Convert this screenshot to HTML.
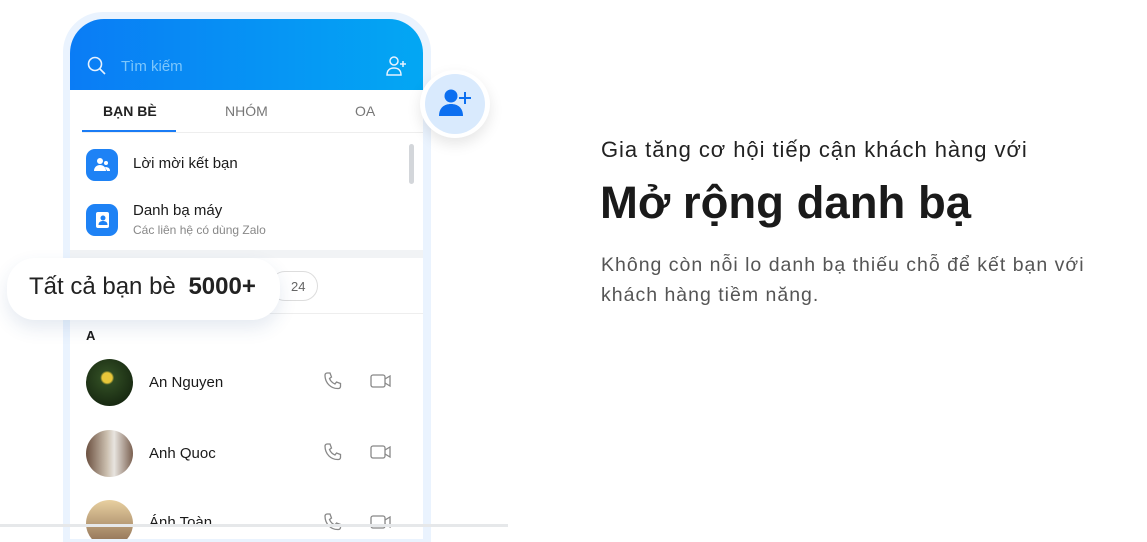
<!DOCTYPE html>
<html><head><meta charset="utf-8"><style>
*{margin:0;padding:0;box-sizing:border-box}
body{width:1147px;height:527px;background:#fff;font-family:"Liberation Sans",sans-serif;position:relative;overflow:hidden}
.abs{position:absolute}
.frame{left:63px;top:12px;width:368px;height:530px;background:#eaf3fe;border-radius:40px 40px 0 0}
.screen{left:70px;top:19px;width:353px;height:520px;background:#fff;border-radius:34px 34px 0 0;overflow:hidden}
.hdr{left:0;top:0;width:353px;height:71px;background:linear-gradient(90deg,#0a7cf5,#03a7f3)}
.t{color:#1a1a1a}
</style></head><body>
<div class="abs frame"></div>
<div class="abs screen">
  <div class="abs hdr">
    <svg class="abs" style="left:17px;top:37px" width="20" height="20" viewBox="0 0 20 20" fill="none" stroke="#e6f2ff" stroke-width="1.6"><circle cx="8" cy="8" r="6.5"/><path d="M13 13l5 5"/></svg>
    <div class="abs" style="left:51px;top:39px;color:#7cc6fb;font-size:15px">Tìm kiếm</div>
    <svg class="abs" style="left:315px;top:36px" width="24" height="22" viewBox="0 0 24 22" fill="none" stroke="#e6f2ff" stroke-width="1.5"><circle cx="9" cy="6" r="4"/><path d="M2 20c0-5 3-7 7-7s7 2 7 7z"/><path d="M18 6v6M15 9h6"/></svg>
  </div>
  <div class="abs t" style="left:33px;top:84px;font-size:14px;font-weight:bold;color:#222">BẠN BÈ</div>
  <div class="abs" style="left:155px;top:84px;font-size:14px;color:#777">NHÓM</div>
  <div class="abs" style="left:285px;top:84px;font-size:14px;color:#777">OA</div>
  <div class="abs" style="left:12px;top:111px;width:94px;height:2px;background:#1a7cf5"></div>
  <div class="abs" style="left:12px;top:113px;width:341px;height:1px;background:#eee"></div>
  <div class="abs" style="left:16px;top:130px;width:32px;height:32px;border-radius:9px;background:#1e82f5"></div>
  <svg class="abs" style="left:22px;top:136px" width="20" height="20" viewBox="0 0 20 20" fill="#fff"><circle cx="8" cy="6" r="3"/><path d="M2 16c0-4 3-6 6-6s6 2 6 6z"/><circle cx="14" cy="8" r="2"/><path d="M13 12c3 0 5 1 5 4h-3z"/></svg>
  <div class="abs t" style="left:63px;top:136px;font-size:15px">Lời mời kết bạn</div>
  <div class="abs" style="left:339px;top:125px;width:5px;height:40px;border-radius:3px;background:#d3d6da"></div>
  <div class="abs" style="left:16px;top:185px;width:32px;height:32px;border-radius:9px;background:#1e82f5"></div>
  <svg class="abs" style="left:22px;top:191px" width="20" height="20" viewBox="0 0 20 20"><rect x="4" y="2" width="13" height="16" rx="2" fill="#fff"/><circle cx="11" cy="8" r="2.5" fill="#1e82f5"/><path d="M6.5 15c0-3 2-4 4.5-4s4.5 1 4.5 4z" fill="#1e82f5"/></svg>
  <div class="abs t" style="left:63px;top:183px;font-size:15px">Danh bạ máy</div>
  <div class="abs" style="left:63px;top:204px;font-size:12px;color:#888">Các liên hệ có dùng Zalo</div>
  <div class="abs" style="left:0;top:231px;width:353px;height:8px;background:#f1f3f5"></div>
  <div class="abs" style="left:200px;top:252px;width:48px;height:30px;border:1px solid #ddd;border-radius:15px;font-size:13px;color:#666;padding:7px 0 0 20px">24</div>
  <div class="abs" style="left:0;top:294px;width:353px;height:1px;background:#eee"></div>
  <div class="abs t" style="left:16px;top:309px;font-size:13px;font-weight:bold">A</div>
  <div class="abs" style="left:16px;top:340px;width:47px;height:47px;border-radius:50%;background:radial-gradient(circle at 45% 40%,#e8c63a 0 5px,#2f4a22 7px,#0d1a0a)"></div>
  <div class="abs t" style="left:79px;top:355px;font-size:15px">An Nguyen</div>
  <div class="abs" style="left:16px;top:411px;width:47px;height:47px;border-radius:50%;background:linear-gradient(90deg,#6b5040,#ccc0b0 45%,#e8e4df 60%,#7a6050)"></div>
  <div class="abs t" style="left:79px;top:426px;font-size:15px">Anh Quoc</div>
  <div class="abs" style="left:16px;top:481px;width:47px;height:47px;border-radius:50%;background:linear-gradient(180deg,#e8d0a0,#8a6a50)"></div>
  <div class="abs t" style="left:79px;top:495px;font-size:15px">Ánh Toàn</div>
  <svg class="abs" style="left:253px;top:352px" width="20" height="20" viewBox="0 0 20 20" fill="none" stroke="#888" stroke-width="1.3"><path d="M4 2l3 0 1.5 4-2 1.5c1 2.5 3 4.5 5.5 5.5l1.5-2 4 1.5v3c0 1-1 2-2 2C8 18 2 12 2 4c0-1 1-2 2-2z"/></svg>
  <svg class="abs" style="left:300px;top:354px" width="22" height="16" viewBox="0 0 22 16" fill="none" stroke="#888" stroke-width="1.3"><rect x="1" y="2" width="14" height="12" rx="2"/><path d="M15 6l5-3v10l-5-3"/></svg>
  <svg class="abs" style="left:253px;top:423px" width="20" height="20" viewBox="0 0 20 20" fill="none" stroke="#888" stroke-width="1.3"><path d="M4 2l3 0 1.5 4-2 1.5c1 2.5 3 4.5 5.5 5.5l1.5-2 4 1.5v3c0 1-1 2-2 2C8 18 2 12 2 4c0-1 1-2 2-2z"/></svg>
  <svg class="abs" style="left:300px;top:425px" width="22" height="16" viewBox="0 0 22 16" fill="none" stroke="#888" stroke-width="1.3"><rect x="1" y="2" width="14" height="12" rx="2"/><path d="M15 6l5-3v10l-5-3"/></svg>
  <svg class="abs" style="left:253px;top:493px" width="20" height="20" viewBox="0 0 20 20" fill="none" stroke="#888" stroke-width="1.3"><path d="M4 2l3 0 1.5 4-2 1.5c1 2.5 3 4.5 5.5 5.5l1.5-2 4 1.5v3c0 1-1 2-2 2C8 18 2 12 2 4c0-1 1-2 2-2z"/></svg>
  <svg class="abs" style="left:300px;top:495px" width="22" height="16" viewBox="0 0 22 16" fill="none" stroke="#888" stroke-width="1.3"><rect x="1" y="2" width="14" height="12" rx="2"/><path d="M15 6l5-3v10l-5-3"/></svg>
</div>
<div class="abs" style="left:420px;top:70px;width:70px;height:68px;border-radius:50%;background:#fff;box-shadow:0 6px 14px rgba(0,0,0,.1)"></div>
<div class="abs" style="left:425px;top:74px;width:60px;height:60px;border-radius:50%;background:#d9eafd"></div>
<svg class="abs" style="left:438px;top:87px" width="36" height="32" viewBox="0 0 36 32" fill="#0c6ff0"><circle cx="13" cy="9" r="6.5"/><path d="M1 29c0-8 5-12 12-12s12 4 12 12z"/><path d="M26 5h2v5h5v2h-5v5h-2v-5h-5v-2h5z"/></svg>
<div class="abs" style="left:7px;top:258px;width:273px;height:62px;border-radius:28px;background:#fff;box-shadow:0 8px 18px rgba(40,80,140,.12)"></div>
<div class="abs t" style="left:29px;top:273px;font-size:24px;color:#222">Tất cả bạn bè <b style="margin-left:6px">5000+</b></div>
<div class="abs" style="left:0;top:524px;width:508px;height:3px;background:#e6e8ea"></div>
<div class="abs t" style="left:601px;top:137px;font-size:22px;letter-spacing:0.95px;color:#222">Gia tăng cơ hội tiếp cận khách hàng với</div>
<div class="abs t" style="left:600px;top:177px;font-size:45.5px;font-weight:bold;color:#1a1a1a">Mở rộng danh bạ</div>
<div class="abs" style="left:601px;top:250px;font-size:19.5px;letter-spacing:1px;line-height:30px;color:#555;width:500px">Không còn nỗi lo danh bạ thiếu chỗ để kết bạn với khách hàng tiềm năng.</div>
</body></html>
